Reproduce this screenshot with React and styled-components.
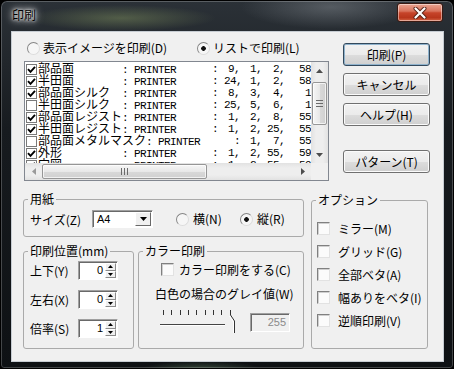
import React from "react";
import styled, { createGlobalStyle } from "styled-components";

const GlobalStyle = createGlobalStyle`
  html, body {
    margin: 0;
    padding: 0;
    background: #000;
  }
  body {
    font-family: "Noto Sans CJK JP", "Noto Sans", sans-serif;
    font-size: 12px;
    color: #000;
  }
  * {
    box-sizing: border-box;
  }
`;

const rows = [
  { on: true, name: "部品面", n: ["9,", "1,", "2,", "58"] },
  { on: true, name: "半田面", n: ["24,", "1,", "2,", "58"] },
  { on: true, name: "部品面シルク", n: ["8,", "3,", "4,", "1"] },
  { on: false, name: "半田面シルク", n: ["25,", "5,", "6,", "1"] },
  { on: true, name: "部品面レジスト", n: ["1,", "2,", "8,", "55"] },
  { on: true, name: "半田面レジスト", n: ["1,", "2,", "25,", "55"] },
  { on: false, name: "部品面メタルマスク", n: [":", "1,", "7,", "55"], wide: true },
  { on: true, name: "外形", n: ["1,", "2,", "55,", "59"] },
  { on: true, name: "穴図", n: ["1,", "2,", "55,", "59"] },
];

const options = ["ミラー(M)", "グリッド(G)", "全部ベタ(A)", "幅ありをベタ(I)", "逆順印刷(V)"];

const Window = styled.div`
  width: 454px;
  height: 369px;
  display: flex;
  flex-direction: column;
  border: 1px solid #000;
  border-radius: 7px 7px 4px 4px;
  background:
    radial-gradient(ellipse 95px 13px at 120px 17px, rgba(150, 170, 105, 0.38), transparent),
    radial-gradient(ellipse 90px 22px at 330px 6px, rgba(120, 126, 132, 0.55), transparent),
    radial-gradient(ellipse 60px 8px at 200px 368px, rgba(110, 150, 110, 0.4), transparent),
    linear-gradient(180deg, #2b3137 0%, #171b1f 35%, #0e1114 100%);
  box-shadow: inset 0 0 0 1px rgba(255, 255, 255, 0.22);
  overflow: hidden;
`;

const TitleBar = styled.div`
  flex: none;
  height: 30px;
  display: flex;
  justify-content: space-between;
  align-items: flex-start;
  padding: 0 10px 0 11px;
`;

const Title = styled.div`
  margin-top: 6px;
  line-height: 16px;
  font-size: 12px;
  color: #000;
  text-shadow: 0 0 3px #fff, 0 0 6px #fff, 0 0 10px rgba(255, 255, 255, 0.85);
`;

const CloseButton = styled.div`
  margin-top: 2px;
  width: 46px;
  height: 19px;
  border: 1px solid #3b1a12;
  border-radius: 3px;
  background: linear-gradient(180deg, #eaa592 0%, #d8735c 42%, #c6442a 52%, #b8361c 80%, #d36445 100%);
  box-shadow: inset 0 0 0 1px rgba(255, 255, 255, 0.45);
  display: flex;
  align-items: center;
  justify-content: center;
`;

const Client = styled.div`
  flex: none;
  margin: 0 9px 0 10px;
  height: 331px;
  background: #f0f0f0;
  border: 1px solid #c6ccd2;
  display: flex;
  flex-direction: column;
`;

const TopSection = styled.div`
  display: flex;
  align-items: flex-start;
`;

const ListColumn = styled.div`
  padding: 8px 0 0 12px;
`;

const ModeRow = styled.div`
  display: grid;
  grid-template-columns: 170px auto;
  height: 16px;
  align-items: center;
  padding-left: 3px;
  margin-bottom: 5px;
`;

const RadioItem = styled.label`
  display: flex;
  align-items: center;
  gap: ${(p) => p.$gap || 3}px;
  width: ${(p) => (p.$w ? `${p.$w}px` : "auto")};
  white-space: nowrap;
  line-height: 16px;
`;

const RadioCircle = styled.span`
  flex: none;
  width: 13px;
  height: 13px;
  border-radius: 50%;
  border: 1px solid;
  border-color: #858585 #dcdcdc #dcdcdc #858585;
  background: ${(p) =>
    p.$on ? "radial-gradient(circle, #111 0 2px, #f6f6f6 2.6px)" : "#f6f6f6"};
`;

const ListBox = styled.div`
  width: 305px;
  height: 120px;
  border: 1px solid #828790;
  background: #fff;
  display: grid;
  grid-template-columns: 286px 17px;
  grid-template-rows: 101px 17px;
`;

const ListRows = styled.div`
  overflow: hidden;
`;

const ListRow = styled.div`
  display: grid;
  grid-template-columns: 13px 174px 12px 16px 22px 23px 26px;
  height: 12px;
  line-height: 12px;
  align-items: center;
  white-space: nowrap;
`;

const ListCheck = styled.span`
  width: 11px;
  height: 11px;
  margin-left: 1px;
  border: 1px solid #7a7a7a;
  background: #fff;
  display: flex;
  align-items: center;
  justify-content: center;
`;

const NameText = styled.span`
  display: inline-block;
  min-width: 84px;
  font-size: 12px;
  line-height: 12px;
`;

const Mono = styled.span`
  font-family: "Liberation Mono", "DejaVu Sans Mono", monospace;
  font-size: 11px;
  line-height: 12px;
  letter-spacing: -0.6px;
  text-align: ${(p) => p.$align || "left"};
  white-space: pre;
`;

const VScroll = styled.div`
  display: flex;
  flex-direction: column;
  background: linear-gradient(90deg, #e2e2e2, #eeeeee 30%, #eeeeee 70%, #e2e2e2);
`;

const HScroll = styled.div`
  display: flex;
  background: linear-gradient(180deg, #e2e2e2, #eeeeee 30%, #eeeeee 70%, #e2e2e2);
`;

const ScrollArrow = styled.div`
  flex: none;
  width: 17px;
  height: 17px;
  display: flex;
  align-items: center;
  justify-content: center;
`;

const Track = styled.div`
  flex: 1;
  padding: ${(p) => (p.$vertical ? "3px 1px 0" : "1px 0")};
`;

const Thumb = styled.div`
  width: ${(p) => (p.$vertical ? "15px" : "165px")};
  height: ${(p) => (p.$vertical ? "43px" : "15px")};
  border: 1px solid #969696;
  border-radius: 2px;
  background: ${(p) =>
    p.$vertical
      ? "linear-gradient(90deg, #f6f6f6, #e8e8e8 50%, #d9d9d9 51%, #d0d0d0)"
      : "linear-gradient(180deg, #f6f6f6, #e8e8e8 50%, #d9d9d9 51%, #d0d0d0)"};
  box-shadow: inset 0 0 0 1px rgba(255, 255, 255, 0.7);
  display: flex;
  align-items: center;
  justify-content: center;
`;

const Corner = styled.div`
  background: #f0f0f0;
`;

const ButtonColumn = styled.div`
  margin-left: 14px;
  padding-top: 11px;
  display: flex;
  flex-direction: column;
  gap: 7px;
`;

const Button = styled.button`
  width: 87px;
  height: 23px;
  margin: ${(p) => (p.$spaced ? "17px 0 0" : "0")};
  padding: 0;
  font: inherit;
  font-size: 12px;
  color: #000;
  border: 1px solid ${(p) => (p.$default ? "#33495c" : "#707070")};
  border-radius: 3px;
  background: linear-gradient(180deg, #f2f2f2 0%, #ebebeb 50%, #dddddd 51%, #cfcfcf 100%);
  box-shadow: inset 0 0 0 1px ${(p) => (p.$default ? "#8fb2cc" : "#fbfbfb")};
`;

const BottomSection = styled.div`
  display: flex;
  align-items: flex-start;
  margin-top: 11px;
  padding-left: 11px;
`;

const LeftStack = styled.div`
  width: 281px;
  display: flex;
  flex-direction: column;
  gap: 7px;
`;

const GroupRow = styled.div`
  display: flex;
  gap: 4px;
`;

const Group = styled.fieldset`
  margin: ${(p) => (p.$ml ? `${p.$mt || 0}px 0 0 ${p.$ml}px` : `${p.$mt || 0}px 0 0`)};
  padding: 0;
  min-width: 0;
  width: ${(p) => p.$w}px;
  height: ${(p) => p.$h}px;
  border: 1px solid #aaaaaa;
  border-radius: 3px;
`;

const Legend = styled.legend`
  margin-left: 4px;
  padding: 0 2px;
  height: 14px;
  line-height: 14px;
  font-size: 12px;
`;

const PaperRow = styled.div`
  display: flex;
  align-items: center;
  height: 18px;
  margin-top: 4px;
  padding-left: 6px;
`;

const FieldLabel = styled.span`
  flex: none;
  width: ${(p) => p.$w}px;
  white-space: nowrap;
`;

const Sunken = styled.div`
  flex: none;
  display: flex;
  border: 1px solid;
  border-color: #a0a0a0 #ffffff #ffffff #a0a0a0;
  box-shadow: inset 1px 1px 0 #696969;
  background: ${(p) => (p.$disabled ? "#f0f0f0" : "#fff")};
`;

const Combo = styled(Sunken)`
  width: 61px;
  height: 18px;
  margin-right: 23px;
`;

const ComboText = styled.span`
  flex: 1;
  padding: 1px 0 0 4px;
  font-family: "Liberation Sans", Arial, sans-serif;
  font-size: 11px;
  line-height: 15px;
`;

const ComboButton = styled.span`
  width: 16px;
  margin: 1px 1px 1px 0;
  border: 1px solid;
  border-color: #fff #696969 #696969 #fff;
  background: #f0f0f0;
  display: flex;
  align-items: center;
  justify-content: center;
`;

const PosRows = styled.div`
  display: flex;
  flex-direction: column;
  gap: 10px;
  padding: 3px 0 0 6px;
`;

const PosRow = styled.div`
  display: flex;
  align-items: center;
  height: 19px;
`;

const Spin = styled(Sunken)`
  width: 40px;
  height: 19px;
`;

const SpinValue = styled.span`
  flex: 1;
  text-align: right;
  padding-right: 2px;
  font-family: "Liberation Sans", Arial, sans-serif;
  font-size: 11px;
  line-height: 17px;
`;

const SpinButtons = styled.span`
  width: 11px;
  display: flex;
  flex-direction: column;
  margin: 1px 1px 1px 0;
`;

const SpinHalf = styled.span`
  flex: 1;
  border: 1px solid;
  border-color: #fff #8a8a8a #8a8a8a #fff;
  background: #f0f0f0;
  display: flex;
  align-items: center;
  justify-content: center;
`;

const ColorContent = styled.div`
  display: flex;
  flex-direction: column;
`;

const CheckItem = styled.label`
  display: flex;
  align-items: center;
  gap: ${(p) => p.$gap || 8}px;
  height: ${(p) => p.$h || 16}px;
  margin: ${(p) => `${p.$mt || 0}px 0 0 ${p.$ml || 0}px`};
  white-space: nowrap;
`;

const CheckBox = styled.span`
  flex: none;
  width: 13px;
  height: 13px;
  border: 1px solid;
  border-color: #808080 #e2e2e2 #e2e2e2 #808080;
  background: #fbfbfb;
  box-shadow: inset 1px 1px 0 #cfcfcf;
`;

const PlainText = styled.div`
  height: 16px;
  line-height: 16px;
  margin: ${(p) => `${p.$mt || 0}px 0 0 ${p.$ml || 0}px`};
  white-space: nowrap;
`;

const SliderRow = styled.div`
  display: flex;
  align-items: flex-start;
  margin: 6px 0 0 19px;
`;

const ValueField = styled(Sunken)`
  width: 40px;
  height: 19px;
  margin: 5px 0 0 12px;
  justify-content: flex-end;
  padding-right: 3px;
  font-family: "Liberation Sans", Arial, sans-serif;
  font-size: 11px;
  line-height: 17px;
  color: #8a8a8a;
`;

const OptionList = styled.div`
  display: flex;
  flex-direction: column;
  gap: 7px;
  padding: 13px 0 0 5px;
`;

function Tri({ dir, color = "#4d4d4d" }) {
  const paths = {
    up: "M0 4 L3.5 0 L7 4 Z",
    down: "M0 0 L7 0 L3.5 4 Z",
    left: "M4 0 L4 7 L0 3.5 Z",
    right: "M0 0 L4 3.5 L0 7 Z",
  };
  const vertical = dir === "up" || dir === "down";
  return (
    <svg width={vertical ? 7 : 4} height={vertical ? 4 : 7} viewBox={vertical ? "0 0 7 4" : "0 0 4 7"}>
      <path d={paths[dir]} fill={color} />
    </svg>
  );
}

function SmallTri({ dir }) {
  return (
    <svg width="5" height="3" viewBox="0 0 5 3">
      <path d={dir === "up" ? "M0 3 L2.5 0 L5 3 Z" : "M0 0 L5 0 L2.5 3 Z"} fill="#000" />
    </svg>
  );
}

function Grip({ vertical }) {
  return vertical ? (
    <svg width="7" height="7" viewBox="0 0 7 7">
      {[0.5, 3.5, 6.5].map((y) => (
        <line key={y} x1="0" y1={y} x2="7" y2={y} stroke="#6b6b6b" />
      ))}
    </svg>
  ) : (
    <svg width="7" height="7" viewBox="0 0 7 7">
      {[0.5, 3.5, 6.5].map((x) => (
        <line key={x} x1={x} y1="0" x2={x} y2="7" stroke="#6b6b6b" />
      ))}
    </svg>
  );
}

function CheckMark() {
  return (
    <svg width="9" height="9" viewBox="0 0 9 9">
      <path d="M1 4.2 L3.5 6.8 L8 1.8" fill="none" stroke="#000" strokeWidth="1.9" />
    </svg>
  );
}

function Slider() {
  const ticks = [5, 13, 22, 30, 38, 47, 55, 63, 72];
  return (
    <svg width="80" height="26" viewBox="0 0 80 26">
      {ticks.map((x) => (
        <line key={x} x1={x + 0.5} y1="2" x2={x + 0.5} y2="7" stroke="#333" />
      ))}
      <line x1="2" y1="16.5" x2="67" y2="16.5" stroke="#444" />
      <line x1="2" y1="17.5" x2="67" y2="17.5" stroke="#fff" />
      <polyline points="72.5,7 76.5,13 76.5,25" fill="none" stroke="#333" />
      <polyline points="71.5,8 75.5,14 75.5,25" fill="none" stroke="#fff" />
    </svg>
  );
}

function CloseGlyph() {
  return (
    <svg width="14" height="12" viewBox="0 0 14 12">
      <path d="M2.5 1.5 L11.5 10.5 M11.5 1.5 L2.5 10.5" stroke="#5a2418" strokeWidth="4" strokeLinecap="round" />
      <path d="M2.5 1.5 L11.5 10.5 M11.5 1.5 L2.5 10.5" stroke="#fff" strokeWidth="2.2" strokeLinecap="round" />
    </svg>
  );
}

function Radio({ on, children, w, gap }) {
  return (
    <RadioItem $w={w} $gap={gap}>
      <RadioCircle $on={on} />
      {children}
    </RadioItem>
  );
}

function SpinField({ value }) {
  return (
    <Spin>
      <SpinValue>{value}</SpinValue>
      <SpinButtons>
        <SpinHalf>
          <SmallTri dir="up" />
        </SpinHalf>
        <SpinHalf>
          <SmallTri dir="down" />
        </SpinHalf>
      </SpinButtons>
    </Spin>
  );
}

export default function App() {
  return (
    <>
      <GlobalStyle />
      <Window>
        <TitleBar>
          <Title>印刷</Title>
          <CloseButton>
            <CloseGlyph />
          </CloseButton>
        </TitleBar>
        <Client>
          <TopSection>
            <ListColumn>
              <ModeRow>
                <Radio on={false}>表示イメージを印刷(D)</Radio>
                <Radio on>リストで印刷(L)</Radio>
              </ModeRow>
              <ListBox>
                <ListRows>
                  {rows.map((r, i) => (
                    <ListRow key={i}>
                      <ListCheck>{r.on && <CheckMark />}</ListCheck>
                      <span>
                        <NameText>{r.name}</NameText>
                        <Mono>: PRINTER</Mono>
                      </span>
                      <Mono>{r.wide ? "" : ":"}</Mono>
                      {r.n.map((v, j) => (
                        <Mono key={j} $align="right">
                          {v}
                        </Mono>
                      ))}
                    </ListRow>
                  ))}
                </ListRows>
                <VScroll>
                  <ScrollArrow>
                    <Tri dir="up" />
                  </ScrollArrow>
                  <Track $vertical>
                    <Thumb $vertical>
                      <Grip vertical />
                    </Thumb>
                  </Track>
                  <ScrollArrow>
                    <Tri dir="down" />
                  </ScrollArrow>
                </VScroll>
                <HScroll>
                  <ScrollArrow>
                    <Tri dir="left" color="#9a9a9a" />
                  </ScrollArrow>
                  <Track>
                    <Thumb>
                      <Grip />
                    </Thumb>
                  </Track>
                  <ScrollArrow>
                    <Tri dir="right" />
                  </ScrollArrow>
                </HScroll>
                <Corner />
              </ListBox>
            </ListColumn>
            <ButtonColumn>
              <Button $default>印刷(P)</Button>
              <Button>キャンセル</Button>
              <Button>ヘルプ(H)</Button>
              <Button $spaced>パターン(T)</Button>
            </ButtonColumn>
          </TopSection>

          <BottomSection>
            <LeftStack>
              <Group $w={281} $h={45}>
                <Legend>用紙</Legend>
                <PaperRow>
                  <FieldLabel $w={62}>サイズ(Z)</FieldLabel>
                  <Combo>
                    <ComboText>A4</ComboText>
                    <ComboButton>
                      <Tri dir="down" color="#000" />
                    </ComboButton>
                  </Combo>
                  <Radio on={false} w={64} gap={4}>
                    横(N)
                  </Radio>
                  <Radio on gap={4}>
                    縦(R)
                  </Radio>
                </PaperRow>
              </Group>
              <GroupRow>
                <Group $w={111} $h={105}>
                  <Legend>印刷位置(mm)</Legend>
                  <PosRows>
                    <PosRow>
                      <FieldLabel $w={48}>上下(Y)</FieldLabel>
                      <SpinField value="0" />
                    </PosRow>
                    <PosRow>
                      <FieldLabel $w={48}>左右(X)</FieldLabel>
                      <SpinField value="0" />
                    </PosRow>
                    <PosRow>
                      <FieldLabel $w={48}>倍率(S)</FieldLabel>
                      <SpinField value="1" />
                    </PosRow>
                  </PosRows>
                </Group>
                <Group $w={166} $h={105}>
                  <Legend>カラー印刷</Legend>
                  <ColorContent>
                    <CheckItem $ml={22} $mt={4} $gap={5} $h={14}>
                      <CheckBox />
                      カラー印刷をする(C)
                    </CheckItem>
                    <PlainText $ml={16} $mt={10}>
                      白色の場合のグレイ値(W)
                    </PlainText>
                    <SliderRow>
                      <Slider />
                      <ValueField $disabled>255</ValueField>
                    </SliderRow>
                  </ColorContent>
                </Group>
              </GroupRow>
            </LeftStack>
            <Group $w={117} $h={156} $ml={7} $mt={1}>
              <Legend>オプション</Legend>
              <OptionList>
                {options.map((o) => (
                  <CheckItem key={o}>
                    <CheckBox />
                    {o}
                  </CheckItem>
                ))}
              </OptionList>
            </Group>
          </BottomSection>
        </Client>
      </Window>
    </>
  );
}
